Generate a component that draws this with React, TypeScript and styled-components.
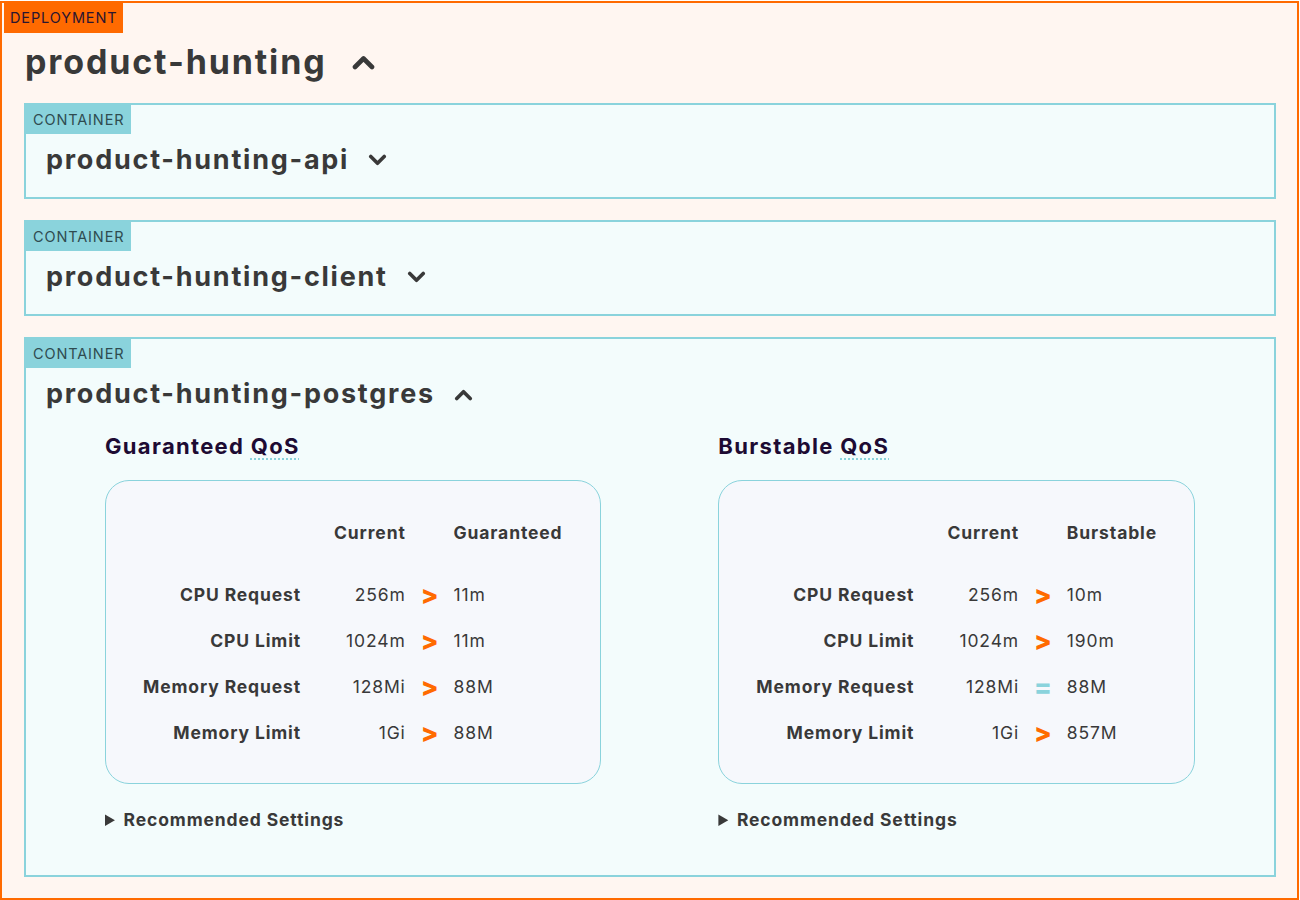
import styled, { createGlobalStyle } from 'styled-components'

const ORANGE = '#ff6a00'
const TEAL = '#8ad3dc'
const INK = '#393939'

const GlobalStyle = createGlobalStyle`
  * { box-sizing: border-box; }
  body {
    margin: 0;
    background: #ffffff;
    color: ${INK};
    font-family: Inter, "Noto Sans", sans-serif;
  }
`

type Row = { label: string; current: string; target: string; sign: '>' | '=' }

type Qos = { name: string; column: string; rows: Row[] }

const containers = [
  { name: 'product-hunting-api', open: false },
  { name: 'product-hunting-client', open: false },
  { name: 'product-hunting-postgres', open: true },
]

const qosList: Qos[] = [
  {
    name: 'Guaranteed',
    column: 'Guaranteed',
    rows: [
      { label: 'CPU Request', current: '256m', target: '11m', sign: '>' },
      { label: 'CPU Limit', current: '1024m', target: '11m', sign: '>' },
      { label: 'Memory Request', current: '128Mi', target: '88M', sign: '>' },
      { label: 'Memory Limit', current: '1Gi', target: '88M', sign: '>' },
    ],
  },
  {
    name: 'Burstable',
    column: 'Burstable',
    rows: [
      { label: 'CPU Request', current: '256m', target: '10m', sign: '>' },
      { label: 'CPU Limit', current: '1024m', target: '190m', sign: '>' },
      { label: 'Memory Request', current: '128Mi', target: '88M', sign: '=' },
      { label: 'Memory Limit', current: '1Gi', target: '857M', sign: '>' },
    ],
  },
]

function Chevron({ up, size }: { up: boolean; size: 'lg' | 'md' }) {
  const w = size === 'lg' ? 25 : 19
  const h = size === 'lg' ? 16 : 13
  return (
    <ChevronSvg width={w} height={h} viewBox="0 0 24 16" aria-hidden="true">
      <path
        d={up ? 'M3.5 13 L12 4.5 L20.5 13' : 'M3.5 3 L12 11.5 L20.5 3'}
        fill="none"
        stroke={INK}
        strokeWidth={4.6}
        strokeLinecap="round"
        strokeLinejoin="round"
      />
    </ChevronSvg>
  )
}

function QosPanel({ qos }: { qos: Qos }) {
  return (
    <QosColumn>
      <QosTitle>
        {qos.name} <abbr title="Quality of Service">QoS</abbr>
      </QosTitle>
      <Card>
        <ResourceTable>
          <thead>
            <tr>
              <th />
              <HeadCell $align="right">Current</HeadCell>
              <th />
              <HeadCell $align="left">{qos.column}</HeadCell>
            </tr>
          </thead>
          <tbody>
            {qos.rows.map((row) => (
              <tr key={row.label}>
                <LabelCell>{row.label}</LabelCell>
                <ValueCell $align="right">{row.current}</ValueCell>
                <Sign $equal={row.sign === '='}>{row.sign}</Sign>
                <ValueCell $align="left">{row.target}</ValueCell>
              </tr>
            ))}
          </tbody>
        </ResourceTable>
      </Card>
      <Details>
        <summary>Recommended Settings</summary>
      </Details>
    </QosColumn>
  )
}

export default function App() {
  return (
    <>
      <GlobalStyle />
      <Deployment>
        <Tag $tone="deployment">DEPLOYMENT</Tag>
        <DeploymentTitle>
          product-hunting
          <Chevron up size="lg" />
        </DeploymentTitle>
        <ContainerList>
          {containers.map((c) => (
            <ContainerBox key={c.name}>
              <Tag $tone="container">CONTAINER</Tag>
              <ContainerTitle>
                {c.name}
                <Chevron up={c.open} size="md" />
              </ContainerTitle>
              {c.open && (
                <QosRow>
                  {qosList.map((q) => (
                    <QosPanel key={q.name} qos={q} />
                  ))}
                </QosRow>
              )}
            </ContainerBox>
          ))}
        </ContainerList>
      </Deployment>
    </>
  )
}

const Deployment = styled.section`
  width: 1299px;
  margin-top: 1px;
  padding: 0 21px 21px 22px;
  border: 2px solid ${ORANGE};
  background: #fff6f1;
`

const Tag = styled.div<{ $tone: 'deployment' | 'container' }>`
  display: inline-block;
  height: ${(p) => (p.$tone === 'deployment' ? '30px' : '29px')};
  margin-left: ${(p) => (p.$tone === 'deployment' ? '-20px' : '0')};
  padding: 0 ${(p) => (p.$tone === 'deployment' ? '6px' : '7px')};
  background: ${(p) => (p.$tone === 'deployment' ? ORANGE : TEAL)};
  color: ${(p) => (p.$tone === 'deployment' ? '#2a1530' : '#2f4b50')};
  font-size: 14.5px;
  line-height: ${(p) => (p.$tone === 'deployment' ? '30px' : '29px')};
  letter-spacing: 0.06em;
`

const ChevronSvg = styled.svg`
  display: block;
  flex: none;
`

const DeploymentTitle = styled.h1`
  display: flex;
  align-items: center;
  gap: 24px;
  margin: 8px 0 20px 1px;
  font-size: 34px;
  line-height: 42px;
  font-weight: 700;
  letter-spacing: 0.055em;
  color: ${INK};
`

const ContainerList = styled.div`
  display: flex;
  flex-direction: column;
  gap: 21px;
`

const ContainerBox = styled.section`
  padding-bottom: 20px;
  border: 2px solid ${TEAL};
  background: #f3fcfc;
`

const ContainerTitle = styled.h2`
  display: flex;
  align-items: center;
  gap: 19px;
  margin: 9px 0 0 20px;
  font-size: 27px;
  line-height: 34px;
  font-weight: 700;
  letter-spacing: 0.065em;
  color: ${INK};
`

const QosRow = styled.div`
  display: flex;
  justify-content: space-between;
  padding: 21px 79px 24px;
`

const QosColumn = styled.div`
  display: flex;
  flex-direction: column;
  align-items: stretch;
`

const QosTitle = styled.h3`
  margin: 0 0 19px;
  font-size: 22px;
  line-height: 29px;
  font-weight: 700;
  letter-spacing: 0.06em;
  color: #1d0b33;

  abbr {
    text-decoration: underline dotted ${TEAL};
    text-decoration-thickness: 2px;
    text-underline-offset: 4px;
    cursor: help;
  }
`

const Card = styled.div`
  padding: 29px 37px 27px 37px;
  border: 1px solid ${TEAL};
  border-radius: 24px;
  background: #f6f8fc;
`

const ResourceTable = styled.table`
  border-collapse: collapse;
  font-size: 17.5px;
  line-height: 46px;
  letter-spacing: 0.05em;

  thead th {
    padding-bottom: 16px;
  }
`

const HeadCell = styled.th<{ $align: 'left' | 'right' }>`
  padding: 0;
  font-weight: 700;
  text-align: ${(p) => p.$align};
  white-space: nowrap;
`

const LabelCell = styled.th`
  padding: 0 33px 0 0;
  font-weight: 700;
  text-align: right;
  white-space: nowrap;
`

const ValueCell = styled.td<{ $align: 'left' | 'right' }>`
  padding: 0;
  font-weight: 400;
  text-align: ${(p) => p.$align};
  white-space: nowrap;
`

const Sign = styled.td<{ $equal: boolean }>`
  padding: 0 15px;
  text-align: center;
  font-size: 26px;
  font-weight: 800;
  letter-spacing: 0;
  color: ${(p) => (p.$equal ? TEAL : ORANGE)};
`

const Details = styled.details`
  margin-top: 24px;
  font-size: 17.5px;
  line-height: 23px;
  font-weight: 700;
  letter-spacing: 0.05em;
  color: ${INK};

  summary {
    cursor: pointer;
  }
`
